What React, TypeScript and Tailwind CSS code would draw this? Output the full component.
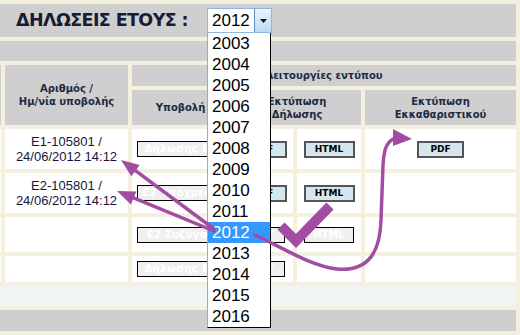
import React from "react";

const purple = "#a34ca4";

const years = [2003, 2004, 2005, 2006, 2007, 2008, 2009, 2010, 2011, 2012, 2013, 2014, 2015, 2016];

type Row = {
  id?: string;
  date?: string;
  doc: string;
  pdf: "on" | "off";
  html: "on" | "off" | "none";
  clear: boolean;
  h: string;
};

const rows: Row[] = [
  { id: "E1-105801 /", date: "24/06/2012 14:12", doc: "Δήλωσης Ε1", pdf: "on", html: "on", clear: true, h: "h-[40px]" },
  { id: "E2-105801 /", date: "24/06/2012 14:12", doc: "Ε2 Υπόχρεου", pdf: "on", html: "on", clear: false, h: "h-[40px]" },
  { doc: "Ε2 Συζύγου", pdf: "off", html: "off", clear: false, h: "h-[35px]" },
  { doc: "Δήλωσης Ε9", pdf: "off", html: "none", clear: false, h: "h-[26px]" },
];

const verdana = "font-['DejaVu_Sans',Verdana,sans-serif]";

function OnButton({ label, wide }: { label: string; wide?: boolean }) {
  return (
    <span
      className={`${wide ? "w-[51px]" : "w-[47px]"} h-[17px] flex items-center justify-center bg-[#d5e6ee] border-2 border-[#555555] ${verdana} text-[9px] font-bold leading-none text-black`}
    >
      {label}
    </span>
  );
}

function OffButton({ label, wide }: { label: string; wide?: boolean }) {
  return (
    <span
      className={`${wide ? "w-[50px]" : "w-[44px]"} h-[16px] flex items-center justify-center bg-[#efefef] border border-black ${verdana} text-[10px] font-bold leading-none text-white`}
    >
      {label}
    </span>
  );
}

const head = `bg-[#cfcfcf] flex items-center justify-center text-center ${verdana} text-[10px] font-bold leading-[13px] text-[#1c2a44]`;
const cell = "bg-white flex items-center justify-center";

export default function App() {
  return (
    <div className="relative w-[520px] h-[335px] overflow-hidden bg-[#f5efdf] font-['Liberation_Sans',Arial,sans-serif]">
      <div className="grid grid-cols-[1px_123px_97px_60px_64px_151px] gap-[4px] pt-[4px]">
        {/* title bar */}
        <div className="col-span-6 h-[33px] bg-[#cfcfcf] flex items-center pl-[16px]">
          <span className={`w-[191px] ${verdana} text-[17.5px] font-bold tracking-[-0.6px] text-[#1a1a33]`}>ΔΗΛΩΣΕΙΣ ΕΤΟΥΣ :</span>
          <div className="relative">
            <div className="w-[65px] h-[25px] bg-white border border-[#8fb6dc] flex items-center justify-between">
              <span className="pl-[4px] text-[17px] leading-none text-black">2012</span>
              <span className="w-[17px] h-[23px] bg-gradient-to-b from-[#eaf4fd] to-[#b9dbf5] border-l border-[#5d93c4] flex items-center justify-center">
                <svg width="7" height="4" viewBox="0 0 7 4">
                  <path d="M0 0 H7 L3.5 4 Z" fill="#111" />
                </svg>
              </span>
            </div>
            <div className="absolute left-0 top-full w-[64px] bg-white border-l border-l-[#a8a8a8] border-r border-r-black border-b border-b-black z-10">
              {years.map((y) => (
                <div
                  key={y}
                  className={`h-[21px] pl-[4px] text-[17px] leading-[21px] ${y === 2012 ? "bg-[#3399ff] text-white" : "text-black"}`}
                >
                  {y}
                </div>
              ))}
            </div>
          </div>
        </div>

        <div className="col-span-6 h-[20px] bg-[#cfcfcf]" />

        {/* header */}
        <div className="row-span-2 bg-[#cfcfcf]" />
        <div className={`row-span-2 ${head}`}>
          Αριθμός /<br />Ημ/νία υποβολής
        </div>
        <div className={`col-span-4 h-[21px] ${head}`}>Λειτουργίες εντύπου</div>
        <div className={`h-[35px] ${head}`}>Υποβολή</div>
        <div className={`col-span-2 ${head}`}>
          Εκτύπωση<br />Δήλωσης
        </div>
        <div className={head}>
          Εκτύπωση<br />Εκκαθαριστικού
        </div>

        {/* data rows */}
        {rows.map((r, i) => (
          <React.Fragment key={i}>
            <div className={`${r.h} bg-white`} />
            <div className={`${cell} flex-col text-[13px] leading-[15px] text-[#16163c]`}>
              {r.id && <span>{r.id}</span>}
              {r.date && <span>{r.date}</span>}
            </div>
            <div className={cell}>
              <span className={`w-[88px] h-[16px] flex items-center justify-center overflow-hidden whitespace-nowrap bg-[#efefef] border border-black ${verdana} text-[10px] font-bold leading-none text-white tracking-[0.4px]`}>
                {r.doc}
              </span>
            </div>
            <div className={cell}>{r.pdf === "on" ? <OnButton label="PDF" /> : <OffButton label="PDF" />}</div>
            <div className={cell}>
              {r.html === "on" && <OnButton label="HTML" wide />}
              {r.html === "off" && <OffButton label="HTML" wide />}
            </div>
            <div className={cell}>{r.clear && <OnButton label="PDF" />}</div>
          </React.Fragment>
        ))}

        <div className="col-span-6 h-[20px] bg-[#f0f4f4]" />
        <div className="col-span-6 h-[21px] bg-[#cfcfcf]" />
      </div>

      {/* hand-drawn annotations */}
      <svg className="absolute left-0 top-0 pointer-events-none z-20" width="520" height="335" viewBox="0 0 520 335">
        <g fill={purple} stroke="none">
          <polygon points="121,160 139.7,165.1 131.3,176.3" />
          <polygon points="117,191 136.3,191.4 130.9,204.4" />
          <polygon points="412,139 393,129 393,146" />
        </g>
        <g fill="none" stroke={purple} strokeLinecap="round">
          <line x1="214" y1="229" x2="135.5" y2="170.7" strokeWidth="3.5" />
          <line x1="214" y1="231" x2="133.6" y2="197.9" strokeWidth="3.5" />
          <path
            d="M255 235 C280 246 310 266 337 269 C370 272 380 250 381 220 L383 165 C384 150 386 142 395 138"
            strokeWidth="3.5"
          />
        </g>
        <polyline
          points="281,226 296,241 330,206"
          fill="none"
          stroke={purple}
          strokeWidth="10"
          strokeLinejoin="miter"
          strokeLinecap="butt"
        />
      </svg>
    </div>
  );
}
